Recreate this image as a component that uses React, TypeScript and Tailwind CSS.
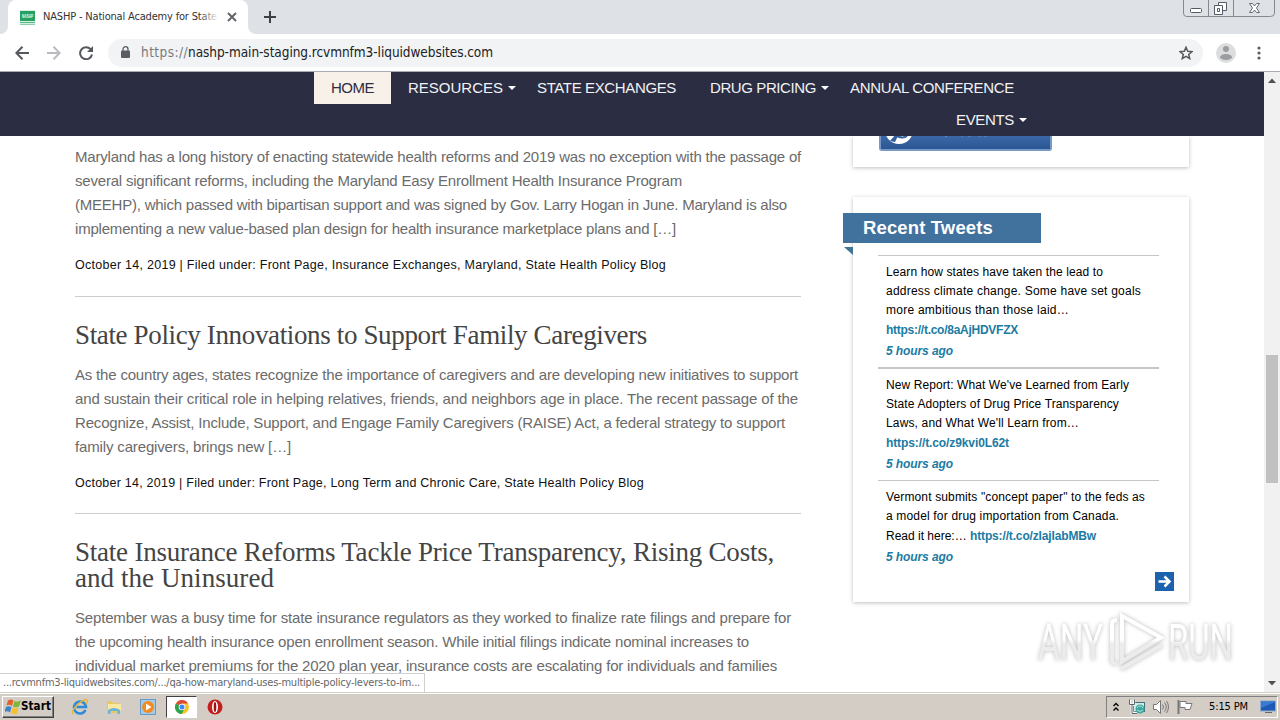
import { useLayoutEffect, useRef, useState } from "react";
import type { ReactNode } from "react";

/** Single line of text tracked out (or in) to an exact width. */
function Fit({ w, className = "", children }: { w: number; className?: string; children: string }) {
  const ref = useRef<HTMLSpanElement>(null);
  const [spacing, setSpacing] = useState(0);
  useLayoutEffect(() => {
    if (ref.current) {
      const natural = ref.current.getBoundingClientRect().width;
      setSpacing((w - natural) / children.length);
    }
  }, [w, children]);
  return (
    <span className={`block whitespace-pre ${className}`}>
      <span ref={ref} className="inline-block" style={{ letterSpacing: spacing }}>
        {children}
      </span>
    </span>
  );
}

type Line = [string, number];

function TabStrip() {
  return (
    <div className="flex h-[34px] shrink-0 justify-between bg-[#dee1e6]">
      <div className="flex">
        <div className="flex w-2 items-end bg-white">
          <div className="h-full w-full rounded-br-lg bg-[#dee1e6]" />
        </div>
        <div className="flex h-full w-[240px] items-center rounded-t-lg bg-white pl-3">
          <svg className="h-[15px] w-[15px] shrink-0 overflow-visible" viewBox="0 0 15 15">
            <rect width="15" height="15" fill="#d5eee0" />
            <rect y="1" width="15" height="10" fill="#27a163" />
            <rect y="12" width="15" height="1" fill="#56b885" />
            <rect y="14" width="15" height="1" fill="#8dceac" />
            <text x="2" y="8" fontSize="4.5" fontWeight="bold" fill="#e8fff2" fontFamily="Liberation Sans, sans-serif" textLength="11" lengthAdjust="spacingAndGlyphs">NASHP</text>
          </svg>
          <div className="relative ml-2 w-[176px] overflow-hidden font-['DejaVu_Sans_Condensed','DejaVu_Sans',sans-serif] text-[11px] text-[#333]">
            <Fit w={174}>NASHP - National Academy for State</Fit>
            <div className="absolute inset-y-0 right-0 w-5 bg-linear-to-r from-transparent to-white" />
          </div>
          <svg className="ml-2 h-[10px] w-[10px] shrink-0" viewBox="0 0 10 10">
            <path d="M1 1l8 8M9 1l-8 8" stroke="#5f6368" strokeWidth="1.9" />
          </svg>
        </div>
        <div className="w-2 bg-white">
          <div className="h-full w-full rounded-bl-lg bg-[#dee1e6]" />
        </div>
        <svg className="mt-[11px] ml-2 h-3 w-3" viewBox="0 0 12 12">
          <path d="M6 0v12M0 6h12" stroke="#3c4043" strokeWidth="2" />
        </svg>
      </div>
      <svg className="mr-1 h-[17px] w-[94px]" viewBox="0 0 94 17" fill="none">
        <path d="M1.5 0v13q0 3.5 3 3.5h84q4 0 4-3.5V0M26.5 0v16M51.5 0v16" stroke="#84888f" />
        <rect x="8.500" y="8.500" width="11" height="4" rx="1" stroke="#555b66" fill="#fff" />
        <path d="M36.500 2.500h8v8h-8z" stroke="#555b66" fill="#fff" />
        <path d="M32.500 5.500h8v9h-8z" stroke="#555b66" fill="#fff" />
        <path d="M35.500 8.500h2v3h-2z" stroke="#555b66" />
        <path d="M67.500 3.500h3l2 2.500 2-2.500h3L74.500 8l3 4.500h-3l-2-2.500-2 2.500h-3l3-4.500z" stroke="#666b75" fill="#fff" />
      </svg>
    </div>
  );
}

function Toolbar() {
  return (
    <div className="flex h-[38px] shrink-0 items-center border-b border-[#a9abb2] bg-white pl-[15px]">
      <svg className="h-[14px] w-[14px]" viewBox="0 0 14 14" fill="none" stroke="#55595e" strokeWidth="2">
        <path d="M14 7H1.500M7.500 .8L1.300 7l6.200 6.200" />
      </svg>
      <svg className="ml-[18px] h-[14px] w-[14px]" viewBox="0 0 14 14" fill="none" stroke="#b9bbbe" strokeWidth="2">
        <path d="M0 7h12.500M6.500 .8L12.700 7l-6.200 6.200" />
      </svg>
      <svg className="ml-[18px] h-[14px] w-[14px]" viewBox="0 0 14 14">
        <path d="M11.600 3.200A6 6 0 1 0 13 8.500" fill="none" stroke="#55595e" strokeWidth="2" />
        <path d="M14 0v6H8z" fill="#55595e" />
      </svg>
      <div className="ml-[15px] flex h-7 w-[1095px] items-center rounded-full bg-[#f1f3f4] pl-[13px]">
        <svg className="h-[13px] w-[9px]" viewBox="0 0 9 13">
          <rect y="4.500" width="9" height="7.500" rx="1" fill="#5a5e63" />
          <path d="M2 5V3.200a2.500 2.500 0 0 1 5 0V5" fill="none" stroke="#5a5e63" strokeWidth="1.300" />
        </svg>
        <div className="ml-[11px] flex font-['DejaVu_Sans_Condensed','DejaVu_Sans',sans-serif] text-[13.500px]">
          <Fit w={47} className="text-[#777b80]">https://</Fit>
          <Fit w={305} className="text-[#202124]">nashp-main-staging.rcvmnfm3-liquidwebsites.com</Fit>
        </div>
        <svg className="mr-[10px] ml-auto h-[14px] w-[14px]" viewBox="0 0 14 14">
          <path d="M7 1.200l1.700 4 4.300.4-3.300 2.800 1 4.200L7 10.400l-3.700 2.200 1-4.200L1 5.600l4.300-.4z" fill="none" stroke="#55595e" strokeWidth="1.500" />
        </svg>
      </div>
      <svg className="ml-[13px] h-5 w-5" viewBox="0 0 20 20">
        <circle cx="10" cy="10" r="10" fill="#dcdddf" />
        <circle cx="10" cy="6" r="3" fill="#9b9da0" />
        <ellipse cx="10" cy="14" rx="6" ry="3" fill="#9b9da0" />
      </svg>
      <svg className="ml-[21px] h-[14px] w-1" viewBox="0 0 4 14" fill="#5a5e63">
        <circle cx="2" cy="2" r="1.600" />
        <circle cx="2" cy="7" r="1.600" />
        <circle cx="2" cy="12" r="1.600" />
      </svg>
    </div>
  );
}

function Caret() {
  return <span className="ml-[5px] h-0 w-0 border-x-4 border-t-4 border-x-transparent border-t-white" />;
}

function SiteNav() {
  return (
    <nav className="h-16 shrink-0 bg-[#2b2d42] text-[15px] leading-8 text-[#f2f2f5]">
      <div className="flex h-8 items-center pl-[314px]">
        <div className="w-[77px] bg-[#f8f1ea] pl-[17px] text-[#2b2d42]"><Fit w={43}>HOME</Fit></div>
        <div className="ml-[17px] flex items-center"><Fit w={95}>RESOURCES</Fit><Caret /></div>
        <div className="ml-[21px]"><Fit w={139}>STATE EXCHANGES</Fit></div>
        <div className="ml-[34px] flex items-center"><Fit w={106}>DRUG PRICING</Fit><Caret /></div>
        <div className="ml-[21px]"><Fit w={164}>ANNUAL CONFERENCE</Fit></div>
      </div>
      <div className="flex h-8 items-center pl-[956px]">
        <Fit w={58}>EVENTS</Fit><Caret />
      </div>
    </nav>
  );
}

function Paragraph({ lines }: { lines: Line[] }) {
  return (
    <div className="text-[15px] leading-6 text-[#6b6b6b]">
      {lines.map(([t, w]) => <Fit key={t} w={w}>{t}</Fit>)}
    </div>
  );
}

function Meta({ line }: { line: Line }) {
  return <div className="mt-[12px] text-[12.500px] leading-6 text-[#111]"><Fit w={line[1]}>{line[0]}</Fit></div>;
}

function Title({ lines }: { lines: Line[] }) {
  return (
    <h2 className="mb-[15px] font-['Liberation_Serif',serif] text-[27px] leading-[26px] text-[#444]">
      {lines.map(([t, w]) => <Fit key={t} w={w}>{t}</Fit>)}
    </h2>
  );
}

function Articles() {
  return (
    <main className="w-[726px] pt-[9px]">
      <Paragraph lines={[
        ["Maryland has a long history of enacting statewide health reforms and 2019 was no exception with the passage of", 726],
        ["several significant reforms, including the Maryland Easy Enrollment Health Insurance Program", 607],
        ["(MEEHP), which passed with bipartisan support and was signed by Gov. Larry Hogan in June. Maryland is also", 712],
        ["implementing a new value-based plan design for health insurance marketplace plans and […]", 601],
      ]} />
      <Meta line={["October 14, 2019 | Filed under: Front Page, Insurance Exchanges, Maryland, State Health Policy Blog", 591]} />
      <hr className="mt-[19px] mb-[25px] border-[#ccc]" />
      <Title lines={[["State Policy Innovations to Support Family Caregivers", 572]]} />
      <Paragraph lines={[
        ["As the country ages, states recognize the importance of caregivers and are developing new initiatives to support", 723],
        ["and sustain their critical role in helping relatives, friends, and neighbors age in place. The recent passage of the", 723],
        ["Recognize, Assist, Include, Support, and Engage Family Caregivers (RAISE) Act, a federal strategy to support", 710],
        ["family caregivers, brings new […]", 216],
      ]} />
      <Meta line={["October 14, 2019 | Filed under: Front Page, Long Term and Chronic Care, State Health Policy Blog", 569]} />
      <hr className="mt-[18px] mb-[25px] border-[#ccc]" />
      <Title lines={[
        ["State Insurance Reforms Tackle Price Transparency, Rising Costs,", 699],
        ["and the Uninsured", 199],
      ]} />
      <Paragraph lines={[
        ["September was a busy time for state insurance regulators as they worked to finalize rate filings and prepare for", 716],
        ["the upcoming health insurance open enrollment season. While initial filings indicate nominal increases to", 674],
        ["individual market premiums for the 2020 plan year, insurance costs are escalating for individuals and families", 702],
      ]} />
    </main>
  );
}

function Tweet({ lines, className, children }: { lines: Line[]; className: string; children: ReactNode }) {
  return (
    <li className={`border-[#c6c6c6] pl-2 text-[12px] leading-[19px] text-black ${className}`}>
      {lines.map(([t, w]) => <Fit key={t} w={w}>{t}</Fit>)}
      {children}
      <Fit w={67} className="mt-[2px] font-bold text-[#1b7ba3] italic">5 hours ago</Fit>
    </li>
  );
}

const link = "font-bold text-[#1b7ba3]";

function Sidebar() {
  return (
    <aside className="ml-[52px] w-[336px]">
      <div className="h-[31px] bg-white pl-[26px] shadow-[0_1px_4px_rgba(0,0,0,0.25)]">
        <div className="h-[15px] w-[173px] overflow-hidden rounded-b-[3px] border-2 border-t-0 border-[#7699c7] bg-linear-to-b from-[#3b68a8] to-[#2b5693]">
          <svg className="h-[13px] w-[120px]" viewBox="0 0 120 13">
            <circle cx="18" cy="-6" r="14" fill="#fff" />
            <path d="M9 5L15-2h3L14 6z" fill="#315f9f" />
            <path d="M16 0q6 3 10 0" fill="none" stroke="#315f9f" strokeWidth="2" />
            <path d="M66 0l-2 1M80 0h2M87 0h3M97 0h3M103 0h3" stroke="#6f8fba" />
          </svg>
        </div>
      </div>
      <section className="mt-[30px] h-[405px] bg-white pt-4 shadow-[0_1px_4px_rgba(0,0,0,0.25)]">
        <h3 className="-ml-[10px] h-[30px] w-[198px] bg-[#41719d] pl-5 text-[18.500px] leading-[30px] font-bold text-white">
          <Fit w={130}>Recent Tweets</Fit>
        </h3>
        <svg className="mt-1 -ml-[9px] h-[8px] w-[9px]" viewBox="0 0 9 8">
          <path d="M0 0h9v8z" fill="#417393" />
        </svg>
        <ul className="ml-[25px] w-[281px]">
          <Tweet className="h-[112px] border-t pt-[7px]" lines={[
            ["Learn how states have taken the lead to", 217],
            ["address climate change. Some have set goals", 255],
            ["more ambitious than those laid…", 183],
          ]}>
            <Fit w={132} className={`mt-px ${link}`}>https://t.co/8aAjHDVFZX</Fit>
          </Tweet>
          <Tweet className="h-[113px] border-t-2 pt-[7px]" lines={[
            ["New Report: What We've Learned from Early", 243],
            ["State Adopters of Drug Price Transparency", 233],
            ["Laws, and What We'll Learn from…", 193],
          ]}>
            <Fit w={123} className={`mt-px ${link}`}>https://t.co/z9kvi0L62t</Fit>
          </Tweet>
          <Tweet className="h-[92px] border-t pt-[7px]" lines={[
            ["Vermont submits \"concept paper\" to the feds as", 259],
            ["a model for drug importation from Canada.", 233],
          ]}>
            <div className="mt-px flex">
              <Fit w={84}>Read it here:… </Fit>
              <Fit w={126} className={link}>https://t.co/zIajIabMBw</Fit>
            </div>
          </Tweet>
        </ul>
        <svg className="ml-[302px] h-[19px] w-[19px]" viewBox="0 0 19 19">
          <rect width="19" height="19" fill="#1d62ac" />
          <path d="M3.500 9.500h11M9.500 4.500l5 5-5 5" fill="none" stroke="#fff" strokeWidth="2.500" />
        </svg>
      </section>
    </aside>
  );
}

function ScrollBar() {
  return (
    <div className="flex w-4 shrink-0 flex-col items-center bg-[#f1f1f1]">
      <svg className="h-4 w-4" viewBox="0 0 16 16"><path d="M4 11l4-4.500 4 4.500z" fill="#505050" /></svg>
      <div className="mt-[267px] h-[128px] w-3 bg-[#c1c1c1]" />
      <svg className="mt-auto h-4 w-4" viewBox="0 0 16 16"><path d="M4 5l4 4.500L12 5z" fill="#505050" /></svg>
    </div>
  );
}

function Watermark() {
  return (
    <svg className="absolute top-[534px] left-[1030px] h-[70px] w-[210px] overflow-visible drop-shadow-[0_0_2px_rgba(0,0,0,0.28)]" viewBox="0 0 210 70" fill="none">
      <defs>
        <linearGradient id="fade" gradientUnits="userSpaceOnUse" x1="0" y1="0" x2="0" y2="70">
          <stop offset="0.48" stopColor="#fff" />
          <stop offset="0.54" stopColor="#ececec" />
        </linearGradient>
      </defs>
      <g fill="url(#fade)" fontFamily="Roboto, sans-serif" fontSize="50">
        <text x="8" y="54" textLength="65" lengthAdjust="spacingAndGlyphs">ANY</text>
        <text x="138" y="54" textLength="65" lengthAdjust="spacingAndGlyphs">RUN</text>
      </g>
      <g stroke="url(#fade)" strokeWidth="4">
        <path d="M92 10l39 21.500-39 24z" />
        <path d="M87 14q-5 0-5 4v37q0 3 5 2M91 63l41-24" />
      </g>
    </svg>
  );
}

function TaskBar() {
  return (
    <footer className="flex h-7 shrink-0 items-center border-t border-[#d4d0c8] bg-[#d4cdc6] pl-[2px] font-['DejaVu_Sans_Condensed','DejaVu_Sans',sans-serif] text-black shadow-[inset_0_1px_0_#fff]">
      <div className="mt-px flex h-[22px] w-[52px] items-center border border-t-white border-r-[#404040] border-b-[#404040] border-l-white pl-[2px] shadow-[inset_-1px_-1px_0_#808080]">
        <svg className="h-4 w-4" viewBox="0 0 16 16">
          <path d="M3 1.500q3-2 5.500 0L7 7Q4.500 5 1.500 6.500z" fill="#e5602b" />
          <path d="M9.500 2q3 1.500 6.300-.5L14 7.500q-3 1.500-6 0z" fill="#7bb83a" />
          <path d="M1 8q3-1.500 5.500 0L5 13.500Q2.500 11.500-.5 13z" fill="#3a83c8" />
          <path d="M7.500 8.500q3 1.500 6 0L12 14.500q-3 1.500-6 0z" fill="#f4c030" />
        </svg>
        <Fit w={30} className="text-[11.500px] font-bold">Start</Fit>
      </div>
      <svg className="ml-[18px] h-4 w-4" viewBox="0 0 16 16" fill="none">
        <path d="M13.500 11A6 6 0 1 1 14 8H4.500" stroke="#2f8ad8" strokeWidth="2.600" />
        <path d="M1 15C-2 11 11-1 15 1q1.500 1-1 4" stroke="#e8b833" strokeWidth="1.400" />
      </svg>
      <svg className="ml-[18px] h-4 w-4" viewBox="0 0 16 16">
        <path d="M1 2h5l1 2h7v10H1z" fill="#e8c860" />
        <path d="M2 5h13v7H2z" fill="#f8e8a0" />
        <path d="M2 11q6-4 12 0v4h-2.500v-3h-7v3H2z" fill="#68b4dc" />
      </svg>
      <svg className="ml-[18px] h-4 w-4" viewBox="0 0 16 16">
        <rect x=".5" y=".5" width="15" height="15" fill="#a6cbea" stroke="#5f9bcc" />
        <circle cx="8" cy="8" r="6" fill="#f28a1d" />
        <path d="M6 4.500l5.500 3.500L6 11.500z" fill="#fff" />
      </svg>
      <div className="ml-[10px] flex h-[22px] w-[31px] items-center justify-center border border-t-[#404040] border-r-white border-b-white border-l-[#404040] bg-white">
        <svg className="h-[14px] w-[14px]" viewBox="0 0 14 14">
          <circle cx="7" cy="7" r="7" fill="#f5c527" />
          <path d="M7 7L.9 3.500A7 7 0 0 1 13.100 3.500H7z" fill="#dd4b3e" />
          <path d="M7 7L.9 3.500A7 7 0 0 0 6.500 14L9.500 9z" fill="#2ba24c" />
          <circle cx="7" cy="7" r="3.300" fill="#fff" />
          <circle cx="7" cy="7" r="2.500" fill="#4285f4" />
        </svg>
      </div>
      <svg className="ml-[10px] h-4 w-4" viewBox="0 0 16 16">
        <circle cx="8" cy="8" r="7.500" fill="#c41d1d" />
        <ellipse cx="8" cy="8" rx="3" ry="6" fill="#fff" />
        <ellipse cx="8" cy="8" rx="1.300" ry="5" fill="#9b1515" />
      </svg>
      <div className="mt-px mr-[2px] ml-auto flex h-[22px] w-[172px] items-center border border-t-[#808080] border-r-white border-b-white border-l-[#808080] pl-[6px]">
        <svg className="h-[10px] w-[6px]" viewBox="0 0 6 10" fill="none" stroke="#000" strokeWidth="1.300">
          <path d="M.5 4L3 1.500 5.500 4M.5 8.500L3 6l2.500 2.500" />
        </svg>
        <svg className="ml-[10px] h-4 w-4" viewBox="0 0 16 16">
          <rect x="4.500" y="3.500" width="11" height="9" fill="#d4ebe9" stroke="#3c7478" />
          <path d="M1 1v4q2 2 4 0V1M3 6v8h5" stroke="#fff" strokeWidth="2.500" fill="none" />
          <path d="M.5.500v5h5v-5M3 6v8.500h5" stroke="#536769" fill="none" />
          <circle cx="11" cy="10" r="4.500" fill="#3fa7a0" />
          <path d="M8 9q3-4 6 0M8 11q3 3 6 0" stroke="#a8e6d6" fill="none" />
        </svg>
        <svg className="ml-[8px] h-4 w-4" viewBox="0 0 16 16" fill="none" stroke="#777">
          <path d="M.5 5.500h3l4-4v13l-4-4h-3z" fill="#fff" />
          <path d="M9.500 5.500q2 2.500 0 5M11.500 3.500q3.500 4.500 0 9M13.500 2q4 6 0 12" />
        </svg>
        <svg className="ml-[8px] h-4 w-4" viewBox="0 0 16 16">
          <path d="M1.500 1v14" stroke="#777" strokeWidth="2" />
          <path d="M3 2.500h6v2h6l-2 6H8v-2H3z" fill="#fff" stroke="#777" />
        </svg>
        <Fit w={39} className="ml-[16px] text-[11px]">5:15 PM</Fit>
        <svg className="ml-[12px] h-[14px] w-4" viewBox="0 0 16 14">
          <rect x=".5" y="1" width="15" height="10" fill="#1e5ab4" stroke="#8eaacc" />
          <path d="M1 8L15 2v-.5H1z" fill="#397bd0" />
          <path d="M5 12.500h7" stroke="#667" />
        </svg>
      </div>
    </footer>
  );
}

export default function App() {
  return (
    <div className="flex h-[720px] w-[1280px] flex-col overflow-hidden bg-white font-['Liberation_Sans',Arial,sans-serif]">
      <TabStrip />
      <Toolbar />
      <div className="relative flex h-[620px] shrink-0 overflow-hidden">
        <div className="flex w-[1264px] flex-col overflow-hidden">
          <SiteNav />
          <div className="flex h-[556px] items-start overflow-hidden pl-[75px]">
            <Articles />
            <Sidebar />
          </div>
        </div>
        <ScrollBar />
        <Watermark />
        <div className="absolute bottom-0 left-0 h-[19px] w-[425px] border-t border-r border-[#d0d0d0] bg-white pl-[3px] font-['DejaVu_Sans_Condensed','DejaVu_Sans',sans-serif] text-[11px] leading-[18px] text-[#666]">
          <Fit w={417}>...rcvmnfm3-liquidwebsites.com/.../qa-how-maryland-uses-multiple-policy-levers-to-im...</Fit>
        </div>
      </div>
      <TaskBar />
    </div>
  );
}
